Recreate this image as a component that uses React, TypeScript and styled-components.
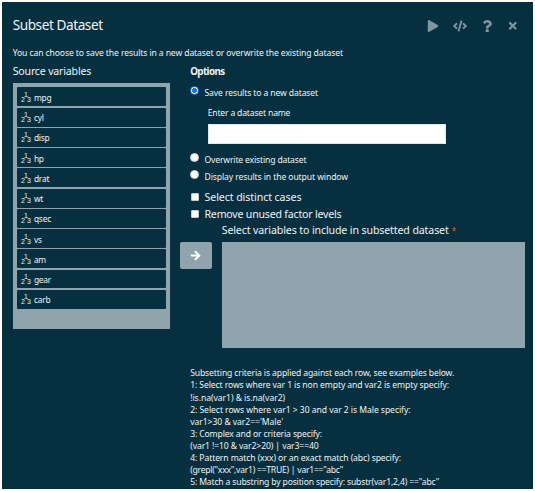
import React from "react";
import styled, { createGlobalStyle } from "styled-components";
import { FaPlay, FaCode, FaQuestion, FaTimes } from "react-icons/fa";
import { ArrowRight } from "lucide-react";

const GlobalStyle = createGlobalStyle`
  * { box-sizing: border-box; }
  body {
    margin: 0;
    background: #fff;
    overflow: hidden;
    font-family: "Noto Sans", "Open Sans", sans-serif;
  }
`;

const Frame = styled.div`
  width: 535px;
  height: 491px;
  padding: 2px;
  background: #fff;
`;

const Dialog = styled.main`
  height: 487px;
  overflow: hidden;
  padding: 13px 8px 0 10.7px;
  background: #06303f;
  color: #eef3f5;
`;

const Header = styled.header`
  display: flex;
  justify-content: space-between;
  height: 31.7px;
`;

const Title = styled.h1`
  margin: 0;
  font-size: 13.6px;
  font-weight: 400;
  line-height: 20px;
  letter-spacing: -0.434px;
  white-space: nowrap;
`;

const Actions = styled.div`
  display: grid;
  grid-template-columns: 20px 33px 23px 27px;
  justify-items: center;
  align-items: center;
  height: 22px;
  margin-right: -1px;
  color: #7e959f;
`;

const IconButton = styled.button`
  display: flex;
  padding: 0;
  border: 0;
  background: none;
  color: inherit;
`;

const Text = styled.div<{ $track?: number }>`
  height: 12px;
  font-size: 8.6px;
  line-height: 12px;
  letter-spacing: ${({ $track = -0.11 }) => $track}px;
  white-space: nowrap;
`;

const Label = styled(Text)`
  height: 16px;
  font-size: 10.6px;
  line-height: 16px;
`;

const SectionTitle = styled(Label)`
  margin-bottom: 7.4px;
  font-size: 9.8px;
  line-height: 17px;
  font-weight: 700;
`;

const Columns = styled.div`
  display: grid;
  grid-template-columns: 157px 1fr;
  column-gap: 10px;
  margin-top: 4px;
`;

const VariableList = styled.ul`
  display: grid;
  grid-template-rows: repeat(11, 18.9px);
  align-content: start;
  row-gap: 1.35px;
  height: 246.5px;
  margin: 4.3px 0 0;
  padding: 4.5px 4px;
  background: #90a4ae;
  list-style: none;
`;

const Variable = styled.li`
  display: flex;
  align-items: center;
  padding: 2px 0 0 4.4px;
  border-radius: 1px;
  background: #06303f;
  font-size: 8.4px;
  line-height: 12px;
  letter-spacing: -0.2px;
`;

const ScaleMark = styled.span`
  display: flex;
  align-items: flex-end;
  width: 12.8px;
  height: 12px;
  font: 400 7px/8px "Liberation Sans", Arial, sans-serif;
  letter-spacing: 0;
`;

const Raised = styled.span`
  margin: 0 -1px 5px -0.9px;
`;

const Options = styled.section`
  padding-left: 10.5px;
`;

const Choice = styled.label<{ $height: number }>`
  display: flex;
  height: ${({ $height }) => $height}px;
`;

const ChoiceText = styled(Text)`
  padding-top: 1px;
`;

const Radio = styled.input.attrs({ type: "radio", name: "destination" })`
  appearance: none;
  flex: none;
  width: 9px;
  height: 9px;
  margin: 0 5.3px 0 0;
  border: 0.5px solid #c5cdd1;
  border-radius: 50%;
  background: #fff;
  &:checked {
    border: 1px solid #0b75ff;
    background: radial-gradient(circle, #0b75ff 0 2.2px, #fff 2.7px);
  }
`;

const Checkbox = styled.input.attrs({ type: "checkbox" })`
  appearance: none;
  flex: none;
  width: 8px;
  height: 8px;
  margin: 3.6px 5.8px 0 0.5px;
  border: 0.5px solid #c5cdd1;
  border-radius: 1px;
  background: #fff;
`;

const NameField = styled.div`
  padding-left: 17.5px;
  margin-bottom: 8.6px;
`;

const NameInput = styled.input`
  display: block;
  width: 238px;
  height: 20.5px;
  margin-top: 5.3px;
  padding: 0 6px;
  border: 1px solid #e4e7e8;
  background: #fff;
`;

const Target = styled.div`
  display: grid;
  grid-template-columns: 32px 303px;
  column-gap: 10px;
  margin-top: 3.9px;
`;

const TargetLabel = styled(Label)`
  padding-left: 42px;
  margin-top: -0.6px;
`;

const Required = styled.span`
  margin-left: 0.5px;
  color: #f0552b;
  font-size: 8px;
`;

const MoveButton = styled.button`
  display: flex;
  align-items: center;
  justify-content: center;
  height: 27px;
  padding: 0;
  border: 0;
  border-radius: 2px;
  background: #90a4ae;
  color: #fff;
`;

const DropZone = styled.div`
  height: 106px;
  background: #90a4ae;
`;

const Notes = styled.div`
  margin-top: 19.3px;
  padding-left: 10.5px;
`;

const NoteLine = styled(Text)`
  height: 12.05px;
`;

const variables = ["mpg", "cyl", "disp", "hp", "drat", "wt", "qsec", "vs", "am", "gear", "carb"];

const notes: [string, number][] = [
  ["Subsetting criteria is applied against each row, see examples below.", -0.126],
  ["1: Select rows where var 1 is non empty and var2 is empty specify:", -0.098],
  ["!is.na(var1) & is.na(var2)", -0.052],
  ["2: Select rows where var1 > 30 and var 2 is Male specify:", -0.064],
  ["var1>30 & var2=='Male'", -0.055],
  ["3: Complex and or criteria specify:", -0.136],
  ["(var1 !=10 & var2>20) | var3==40", -0.105],
  ["4: Pattern match (xxx) or an exact match (abc) specify:", -0.105],
  ['(grepl("xxx",var1) ==TRUE) | var1=="abc"', -0.251],
  ['5: Match a substring by position specify: substr(var1,2,4) =="abc"', -0.16],
];

export default function App() {
  return (
    <Frame>
      <GlobalStyle />
      <Dialog>
        <Header>
          <Title>Subset Dataset</Title>
          <Actions>
            <IconButton aria-label="Run"><FaPlay size={12} /></IconButton>
            <IconButton aria-label="Show code"><FaCode size={14} /></IconButton>
            <IconButton aria-label="Help"><FaQuestion size={12.5} /></IconButton>
            <IconButton aria-label="Close"><FaTimes size={11.5} /></IconButton>
          </Actions>
        </Header>
        <Text $track={-0.107}>
          You can choose to save the results in a new dataset or overwrite the existing dataset
        </Text>
        <Columns>
          <section>
            <Label $track={-0.187}>Source variables</Label>
            <VariableList>
              {variables.map((name) => (
                <Variable key={name}>
                  <ScaleMark>
                    <span>2</span>
                    <Raised>1</Raised>
                    <span>3</span>
                  </ScaleMark>
                  {name}
                </Variable>
              ))}
            </VariableList>
          </section>
          <div>
            <Options>
              <SectionTitle $track={-0.6}>Options</SectionTitle>
              <Choice $height={20.6}>
                <Radio defaultChecked />
                <ChoiceText $track={-0.117}>Save results to a new dataset</ChoiceText>
              </Choice>
              <NameField>
                <Text $track={-0.181}>Enter a dataset name</Text>
                <NameInput />
              </NameField>
              <Choice $height={16.8}>
                <Radio />
                <ChoiceText $track={-0.157}>Overwrite existing dataset</ChoiceText>
              </Choice>
              <Choice $height={19.4}>
                <Radio />
                <ChoiceText $track={-0.1}>Display results in the output window</ChoiceText>
              </Choice>
              <Choice $height={16.8}>
                <Checkbox />
                <Label $track={-0.071}>Select distinct cases</Label>
              </Choice>
              <Choice $height={16.8}>
                <Checkbox />
                <Label $track={-0.204}>Remove unused factor levels</Label>
              </Choice>
            </Options>
            <TargetLabel $track={-0.119}>
              Select variables to include in subsetted dataset <Required>*</Required>
            </TargetLabel>
            <Target>
              <MoveButton aria-label="Add variables"><ArrowRight size={13} strokeWidth={3.6} /></MoveButton>
              <DropZone />
            </Target>
            <Notes>
              {notes.map(([line, track]) => (
                <NoteLine key={line} $track={track}>{line}</NoteLine>
              ))}
            </Notes>
          </div>
        </Columns>
      </Dialog>
    </Frame>
  );
}
